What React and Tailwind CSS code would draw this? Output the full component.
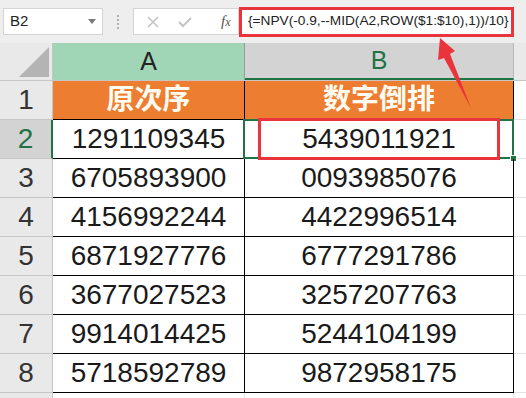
const rows = [
  ["1291109345", "5439011921"],
  ["6705893900", "0093985076"],
  ["4156992244", "4422996514"],
  ["6871927776", "6777291786"],
  ["3677027523", "3257207763"],
  ["9914014425", "5244104199"],
  ["5718592789", "9872958175"],
];

const font = { fontFamily: '"Liberation Sans", "Noto Sans CJK SC", sans-serif' };

function Toolbar() {
  return (
    <div className="flex items-center h-[43px] bg-[#eeeeee] pl-[3px]">
      {/* name box */}
      <div className="flex items-center justify-between w-[100px] h-[27px] bg-white border border-[#d4d4d4] pl-[6px] pr-[6px]">
        <span className="text-[15px] text-[#222]">B2</span>
        <span className="w-0 h-0 border-l-[4px] border-r-[4px] border-t-[5px] border-l-transparent border-r-transparent border-t-[#7a7a7a]" />
      </div>
      <div className="flex flex-col gap-[2px] ml-[14px] mr-[14px]">
        <span className="w-[2px] h-[2px] bg-[#b0b0b0]" />
        <span className="w-[2px] h-[2px] bg-[#b0b0b0]" />
        <span className="w-[2px] h-[2px] bg-[#b0b0b0]" />
        <span className="w-[2px] h-[2px] bg-[#b0b0b0]" />
      </div>
      {/* cancel / enter / fx */}
      <div className="flex items-center w-[106px] h-[27px] bg-white border border-[#d4d4d4]">
        <svg width="14" height="14" viewBox="0 0 14 14" className="ml-[12px]">
          <path d="M2 2 L12 12 M12 2 L2 12" stroke="#c4c4c4" strokeWidth="1.6" />
        </svg>
        <svg width="16" height="14" viewBox="0 0 16 14" className="ml-[17px]">
          <path d="M2 7 L6 11 L14 3" stroke="#c4c4c4" strokeWidth="2" fill="none" />
        </svg>
        <span className="ml-[28px] text-[15px] italic text-[#555]" style={{ fontFamily: '"Liberation Serif", serif' }}>
          f<span className="text-[12px]">x</span>
        </span>
      </div>
      {/* formula */}
      <div className="flex items-center w-[275px] h-[30px] bg-white border-[3px] border-[#e8343a] pl-[6px] overflow-hidden">
        <span className="text-[13.7px] text-[#222] whitespace-nowrap">
          {"{=NPV(-0.9,--MID(A2,ROW($1:$10),1))/10}"}
        </span>
      </div>
    </div>
  );
}

function Arrow() {
  return (
    <svg width="526" height="398" className="absolute left-0 top-0 pointer-events-none">
      <polygon
        points="440,38 455,51 450,54 471,108 444,58 438,60"
        fill="#e8343a"
      />
    </svg>
  );
}

export default function App() {
  return (
    <div className="relative w-[526px] h-[398px] overflow-hidden bg-white" style={font}>
      <Toolbar />

      {/* column headers */}
      <div className="flex h-[38px] border-b border-[#c6c6c6] bg-[#e9e9e9]">
        <div className="relative w-[53px] border-r border-[#c6c6c6]">
          <svg width="30" height="30" className="absolute right-[3px] bottom-[3px]">
            <polygon points="30,0 30,30 0,30" fill="#b4b4b4" />
          </svg>
        </div>
        <div className="w-[192px] flex items-center justify-center bg-[#a0d5b6] border-r border-[#9a9a9a] text-[25px] text-[#222]">
          A
        </div>
        <div className="w-[269px] flex items-center justify-center bg-[#d3d3d3] border-b-2 border-[#217346] border-r border-r-[#b8b8b8] text-[25px] text-[#217346]">
          B
        </div>
        <div className="flex-1 bg-[#e9e9e9]" />
      </div>

      {/* header row 1 */}
      <div className="flex h-[39px]">
        <div className="w-[53px] flex items-center justify-center bg-[#e9e9e9] border-r border-b border-[#c6c6c6] text-[28px] text-[#333]">
          1
        </div>
        <div className="w-[192px] flex items-center justify-center bg-[#ed7d31] border-r border-b border-black text-[28px] font-bold text-[#fffbf0]">
          原次序
        </div>
        <div className="w-[269px] flex items-center justify-center bg-[#ed7d31] border-r border-b border-black text-[28px] font-bold text-[#fffbf0]">
          数字倒排
        </div>
        <div className="flex-1 border-b border-[#e2e2e2]" />
      </div>

      {rows.map((r, i) => {
        const sel = i === 0;
        return (
          <div key={i} className="flex h-[39px]">
            <div
              className={
                sel
                  ? "w-[53px] flex items-center justify-center bg-[#d3d3d3] border-r-2 border-r-[#217346] border-b border-b-[#c6c6c6] text-[28px] text-[#217346]"
                  : "w-[53px] flex items-center justify-center bg-[#e9e9e9] border-r border-b border-[#c6c6c6] text-[28px] text-[#333]"
              }
            >
              {i + 2}
            </div>
            <div className="w-[192px] flex items-center justify-center border-r border-b border-black text-[28px] text-[#1a1a1a]">
              {r[0]}
            </div>
            <div className="relative w-[269px] flex items-center justify-center border-r border-b border-black text-[28px] text-[#1a1a1a]">
              {r[1]}
              {sel && (
                <>
                  <div className="absolute -left-[2px] -top-[1px] -right-[1px] -bottom-[1px] border-2 border-[#217346]" />
                  <div className="absolute left-[13px] -top-[2px] w-[242px] h-[42px] border-[3px] border-[#e8343a]" />
                  <div className="absolute -right-[4px] -bottom-[4px] w-[7px] h-[7px] bg-[#217346] border border-white" />
                </>
              )}
            </div>
            <div className="flex-1 border-b border-[#e2e2e2]" />
          </div>
        );
      })}

      <div className="flex h-[10px]">
        <div className="w-[53px] bg-[#e9e9e9] border-r border-[#c6c6c6]" />
        <div className="w-[192px] border-r border-[#e2e2e2]" />
        <div className="w-[269px] border-r border-[#e2e2e2]" />
      </div>

      <Arrow />
    </div>
  );
}
